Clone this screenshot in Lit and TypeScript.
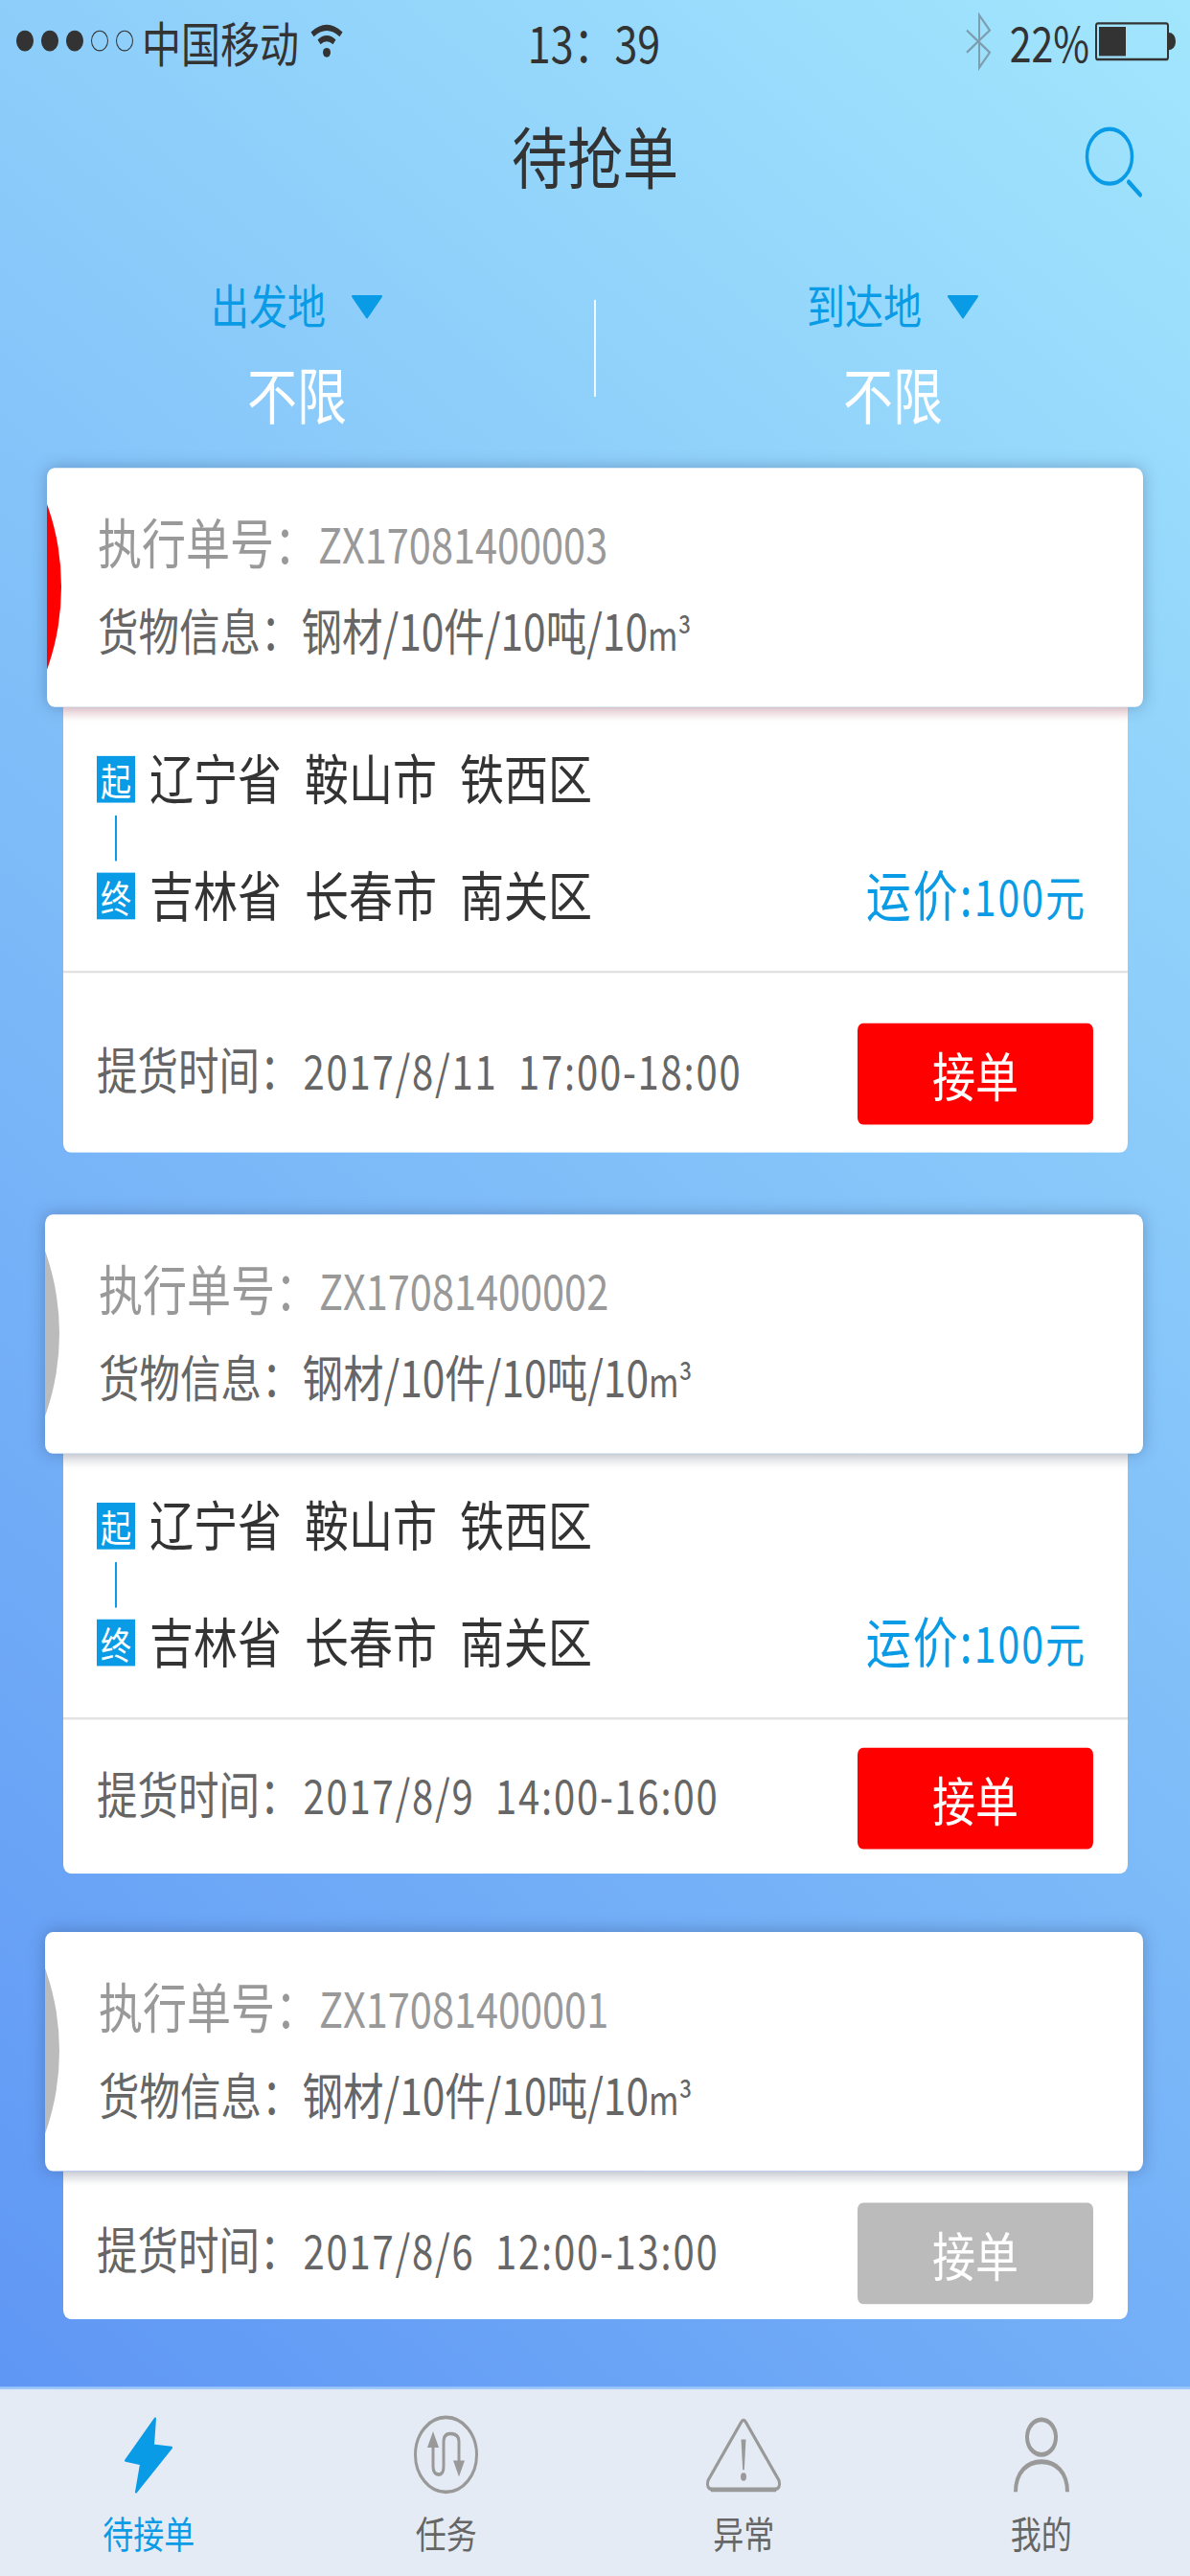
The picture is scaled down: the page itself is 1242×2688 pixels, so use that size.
import { LitElement, css, html, nothing } from 'lit';
import { customElement } from 'lit/decorators.js';

interface Order {
  no: string;
  goods: string;
  from?: string[];
  to?: string[];
  price?: string;
  time: string;
  pos: 'first' | 'mid' | 'last';
  active: boolean;
}

const orders: Order[] = [
  {
    no: 'ZX17081400003',
    goods: '钢材/10件/10吨/10',
    from: ['辽宁省', '鞍山市', '铁西区'],
    to: ['吉林省', '长春市', '南关区'],
    price: '100元',
    time: '2017/8/11  17:00-18:00',
    pos: 'first',
    active: true,
  },
  {
    no: 'ZX17081400002',
    goods: '钢材/10件/10吨/10',
    from: ['辽宁省', '鞍山市', '铁西区'],
    to: ['吉林省', '长春市', '南关区'],
    price: '100元',
    time: '2017/8/9  14:00-16:00',
    pos: 'mid',
    active: true,
  },
  {
    no: 'ZX17081400001',
    goods: '钢材/10件/10吨/10',
    time: '2017/8/6  12:00-13:00',
    pos: 'last',
    active: false,
  },
];

@customElement('app-root')
export class AppRoot extends LitElement {
  static override styles = css`
    :host {
      display: block;
      width: 1242px;
      height: 2688px;
      overflow: hidden;
      font-family: 'Noto Sans CJK SC', 'Noto Sans', sans-serif;
      font-weight: 400;
    }
    /* the whole screen is a 1242x2208 layout stretched to 2688 */
    .frame {
      width: 1242px;
      height: 2208px;
      display: flex;
      flex-direction: column;
      transform: scaleY(1.21739);
      transform-origin: 0 0;
      background: linear-gradient(216deg, #a2e6fd 0%, #5b92f4 100%);
    }

    .status {
      height: 70px;
      display: grid;
      grid-template-columns: 1fr auto 1fr;
      align-items: center;
      padding: 0 15px 0 17px;
      font-size: 41px;
      line-height: 48px;
      color: #333;
    }
    .status-left,
    .status-right {
      display: flex;
      align-items: center;
    }
    .status-right {
      justify-content: flex-end;
    }
    .dots {
      display: flex;
      gap: 8px;
      margin-right: 9px;
    }
    .dot {
      width: 18px;
      height: 18px;
      border-radius: 50%;
      box-sizing: border-box;
      border: 1.5px solid #333;
    }
    .dot.on {
      background: #333;
    }
    .wifi {
      margin-left: 12px;
    }
    .time {
      margin-right: 4px;
      font-size: 43px;
    }
    .bt {
      margin-right: 20px;
    }
    .battery {
      position: relative;
      width: 77px;
      height: 33px;
      box-sizing: border-box;
      border: 2px solid #333;
      border-radius: 3px;
      margin: 0 7px 0 6px;
      padding: 2px;
    }
    .battery i {
      display: block;
      width: 28px;
      height: 100%;
      background: #333;
    }
    .battery::after {
      content: '';
      position: absolute;
      right: -9px;
      top: 7px;
      width: 7px;
      height: 15px;
      background: #333;
      border-radius: 0 8px 8px 0;
    }

    .nav {
      height: 132px;
      display: grid;
      grid-template-columns: 1fr auto 1fr;
      align-items: center;
      padding-right: 50px;
    }
    .title {
      grid-column: 2;
      font-size: 58px;
      line-height: 70px;
      color: #333;
      margin: 0 0 6px 50px;
    }
    .search {
      justify-self: end;
      margin-top: 4px;
    }

    .filter {
      display: grid;
      grid-template-columns: 1fr 2px 1fr;
      padding: 35px 0 34px;
    }
    .filter-col {
      display: flex;
      flex-direction: column;
      align-items: center;
      gap: 22px;
    }
    .filter-label {
      display: flex;
      align-items: center;
      gap: 26px;
      font-size: 40px;
      line-height: 48px;
      color: #0a9be6;
    }
    .filter-label svg {
      margin-top: 3px;
    }
    .filter-value {
      font-size: 52px;
      line-height: 60px;
      color: #fff;
    }
    .filter-line {
      margin-top: 20px;
      height: 83px;
      background: rgba(255, 255, 255, 0.85);
    }

    .list {
      flex: 1;
      display: flex;
      flex-direction: column;
      gap: 50px;
    }
    .card.first {
      margin-bottom: 3px;
    }
    .head {
      position: relative;
      overflow: hidden;
      height: 205px;
      margin: 0 49px 0 47px;
      box-sizing: border-box;
      padding: 37px 0 0 56px;
      background: #fff;
      border-radius: 8px;
      box-shadow: 0 0 14px rgba(40, 60, 100, 0.35);
    }
    .card.first .head {
      margin: 0 49px;
      padding-left: 53px;
    }
    .head::before {
      content: '';
      position: absolute;
      left: -335px;
      top: -73px;
      width: 350px;
      height: 350px;
      border-radius: 50%;
      background: #bbb;
    }
    .card.first .head::before {
      background: #f00;
    }
    .order-no {
      display: flex;
      align-items: baseline;
      font-size: 46px;
      line-height: 50px;
      color: #999;
    }
    .order-no b {
      font-weight: inherit;
      font-size: 41.5px;
    }
    .goods {
      margin-top: 25px;
      font-size: 42.5px;
      line-height: 50px;
      color: #666;
    }
    .goods small {
      font-size: 34px;
    }
    .body {
      margin: 0 65px 0 66px;
      background: linear-gradient(rgba(90, 90, 90, 0.12), rgba(90, 90, 90, 0) 12px), #fff;
      border-radius: 0 0 8px 8px;
    }
    .card.first .body {
      background: linear-gradient(rgba(255, 0, 0, 0.12), rgba(255, 0, 0, 0) 12px), #fff;
    }
    .route {
      padding: 42px 43px 44px 35px;
      border-bottom: 2px solid #e2e2e2;
    }
    .stop {
      display: flex;
      align-items: center;
      font-size: 46px;
      line-height: 40px;
      color: #333;
    }
    .tag {
      width: 40px;
      height: 40px;
      margin-right: 15px;
      background: #0a9be6;
      color: #fff;
      font-size: 32px;
      line-height: 40px;
      text-align: center;
    }
    .place {
      margin: -3px 24px 3px 0;
    }
    .link {
      width: 2px;
      height: 39px;
      margin: 11px 0 10px 19px;
      background: #0a9be6;
    }
    .price {
      margin: -3px 0 3px auto;
      color: #0a9be6;
      font-size: 47px;
      letter-spacing: 2px;
    }
    .price b {
      font-weight: inherit;
      font-size: 41px;
      line-height: 0;
    }
    .pickup {
      display: flex;
      align-items: center;
      justify-content: space-between;
      padding: 24px 36px 21px 35px;
      font-size: 42.5px;
      color: #666;
    }
    .card.first .pickup {
      padding-top: 43px;
      padding-bottom: 24px;
    }
    .card.last .pickup {
      padding-top: 27px;
      padding-bottom: 13px;
    }
    .pickup-text {
      display: flex;
      align-items: baseline;
      margin-top: -11px;
      white-space: pre;
    }
    .pickup-text b {
      font-weight: inherit;
      font-size: 40px;
      letter-spacing: 1.8px;
      margin-left: 3px;
    }
    .btn {
      width: 246px;
      height: 87px;
      border-radius: 6px;
      background: #f00;
      color: #fff;
      font-size: 45px;
      line-height: 87px;
      text-align: center;
    }
    .btn.off {
      background: #bbb;
    }

    .tabs {
      height: 162px;
      box-sizing: border-box;
      display: grid;
      grid-template-columns: repeat(4, 1fr);
      background: #e5ebf4;
      border-top: 2px solid #9cc7fb;
    }
    .tab {
      display: flex;
      flex-direction: column;
      align-items: center;
      font-size: 32px;
      line-height: 44px;
      color: #666;
    }
    .tab.on {
      color: #0a9be6;
    }
    .tab-icon {
      height: 72px;
      margin-top: 20px;
      margin-bottom: 8px;
      display: flex;
      align-items: center;
    }
    svg {
      display: block;
      overflow: visible;
    }
  `;

  private renderStatus() {
    return html`
      <div class="status">
        <div class="status-left">
          <div class="dots">
            ${[1, 1, 1, 0, 0].map((on) => html`<span class="dot ${on ? 'on' : ''}"></span>`)}
          </div>
          <span>中国移动</span>
          <svg class="wifi" width="34" height="30" viewBox="0 0 34 30" fill="none" stroke="#333" stroke-width="5">
            <path d="M2 9.5 Q17 -2 32 9.5" />
            <path d="M9 16 Q17 10 25 16" />
            <circle cx="17" cy="25" r="4" fill="#333" stroke="none" />
          </svg>
        </div>
        <div class="time">13：39</div>
        <div class="status-right">
          <svg class="bt" width="25" height="47" viewBox="0 0 25 47" fill="none" stroke="#7d9eae" stroke-width="2">
            <path d="M0 14 L24 33 L13 46 V1 L24 14 L0 33" />
          </svg>
          <span>22%</span>
          <div class="battery"><i></i></div>
        </div>
      </div>
    `;
  }

  private renderNav() {
    return html`
      <div class="nav">
        <div class="title">待抢单</div>
        <svg class="search" width="59" height="59" viewBox="0 0 59 59" fill="none" stroke="#0a9be6" stroke-width="3.5">
          <circle cx="25" cy="25" r="23.5" />
          <path d="M45 47 L57 58" stroke-width="4" stroke-linecap="round" />
        </svg>
      </div>
    `;
  }

  private renderFilterCol(label: string) {
    return html`
      <div class="filter-col">
        <div class="filter-label">
          <span>${label}</span>
          <svg width="34" height="20" viewBox="0 0 34 20">
            <path d="M2 1 H32 L17 19 Z" fill="#0a9be6" stroke="#0a9be6" stroke-width="2" stroke-linejoin="round" />
          </svg>
        </div>
        <div class="filter-value">不限</div>
      </div>
    `;
  }

  private renderStop(tag: string, places: string[], price?: string) {
    return html`
      <div class="stop">
        <span class="tag">${tag}</span>
        ${places.map((p) => html`<span class="place">${p}</span>`)}
        ${price ? html`<span class="price">运价:<b>${price}</b></span>` : nothing}
      </div>
    `;
  }

  private renderCard(o: Order) {
    return html`
      <div class="card ${o.pos}">
        <div class="head">
          <div class="order-no"><span>执行单号：</span><b>${o.no}</b></div>
          <div class="goods">货物信息：${o.goods}<small>m³</small></div>
        </div>
        <div class="body">
          ${o.from && o.to
            ? html`
                <div class="route">
                  ${this.renderStop('起', o.from)}
                  <div class="link"></div>
                  ${this.renderStop('终', o.to, o.price)}
                </div>
              `
            : nothing}
          <div class="pickup">
            <div class="pickup-text"><span>提货时间：</span><b>${o.time}</b></div>
            <div class="btn ${o.active ? '' : 'off'}">接单</div>
          </div>
        </div>
      </div>
    `;
  }

  private renderTabs() {
    const grey = '#999';
    return html`
      <div class="tabs">
        <div class="tab on">
          <div class="tab-icon">
            <svg width="52" height="66" viewBox="0 0 52 66">
              <path d="M33 2 L31 25 L50 27 L13 65 L18 41 L2 38 Z" fill="#0a9be6" stroke="#0a9be6" stroke-width="2" stroke-linejoin="round" />
            </svg>
          </div>
          <span>待接单</span>
        </div>
        <div class="tab">
          <div class="tab-icon">
            <svg width="67" height="70" viewBox="0 0 67 70" fill="none" stroke=${grey} stroke-width="3">
              <circle cx="33.5" cy="35" r="32" />
              <path d="M20 24 V45 Q20 52 26 52 Q31 52 31 45 V24 Q31 17 38 17 Q47 17 47 24 V44" />
              <path d="M20 15 L14 29 H26 Z M47 54 L41 40 H53 Z" fill=${grey} stroke="none" />
            </svg>
          </div>
          <span>任务</span>
        </div>
        <div class="tab">
          <div class="tab-icon">
            <svg width="78" height="63" viewBox="0 0 78 63" fill="none" stroke=${grey} stroke-width="3">
              <path d="M36 4 Q39 -1 42 4 L76 53 Q78 60 72 61 H6 Q0 60 2 53 Z" stroke-linejoin="round" />
              <path d="M5 61 H73" stroke-width="4" />
              <path d="M36.5 18 H41.500 L39.800 44 H38.200 Z" fill=${grey} stroke="none" />
              <ellipse cx="39" cy="50" rx="3" ry="3.500" fill=${grey} stroke="none" />
            </svg>
          </div>
          <span>异常</span>
        </div>
        <div class="tab">
          <div class="tab-icon">
            <svg width="58" height="63" viewBox="0 0 58 63" fill="none" stroke=${grey} stroke-width="4">
              <circle cx="29" cy="16" r="15" />
              <path d="M2 63 C2 46 14 37 29 37 C44 37 56 46 56 63" />
            </svg>
          </div>
          <span>我的</span>
        </div>
      </div>
    `;
  }

  override render() {
    return html`
      <div class="frame">
        ${this.renderStatus()} ${this.renderNav()}
        <div class="filter">
          ${this.renderFilterCol('出发地')}
          <div class="filter-line"></div>
          ${this.renderFilterCol('到达地')}
        </div>
        <div class="list">${orders.map((o) => this.renderCard(o))}</div>
        ${this.renderTabs()}
      </div>
    `;
  }
}
